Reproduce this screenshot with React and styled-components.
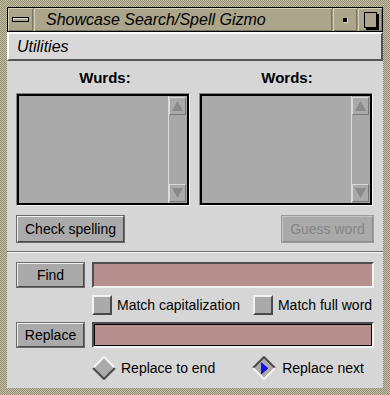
import React from "react";
import styled, { createGlobalStyle } from "styled-components";

const Global = createGlobalStyle`
  html, body { margin: 0; padding: 0; background: #000; }
  body { font-family: "Liberation Sans", Arial, sans-serif; }
  * { box-sizing: border-box; }
`;

const BG = "#d6d6d6";
const FACE = "#aaaaaa";

const Window = styled.div`
  width: 390px;
  height: 395px;
  padding: 7px;
  display: flex;
  flex-direction: column;
  background: repeating-conic-gradient(#c9c4a8 0 25%, #8f8a72 0 50%) 0 0 / 2px 2px;
`;

const TitleBar = styled.div`
  height: 25px;
  display: flex;
  border: 1px solid #000;
  background: #aaa58b;
`;

const TitleCell = styled.div`
  width: ${(p) => p.$w}px;
  display: flex;
  align-items: center;
  justify-content: center;
  box-shadow: inset 1px 1px 0 #d6d2ba, inset -1px -1px 0 #7a7662;
  border-left: ${(p) => (p.$sep ? "1px dotted #8a866f" : "none")};
`;

const TitleText = styled.div`
  flex: 1;
  display: flex;
  align-items: center;
  padding-left: 12px;
  font-style: italic;
  font-size: 16px;
  color: #000;
  box-shadow: inset 1px 1px 0 #d6d2ba, inset -1px -1px 0 #7a7662;
  border-left: 1px dotted #8a866f;
`;

const MenuGlyph = styled.div`
  width: 17px;
  height: 5px;
  background: #aaa58b;
  border: 1px solid #000;
  box-shadow: inset 1px 1px 0 #e0dcc4;
`;

const MinGlyph = styled.div`
  width: 4px;
  height: 4px;
  background: #000;
  box-shadow: 1px 1px 0 #e0dcc4;
`;

const MaxGlyph = styled.div`
  width: 13px;
  height: 16px;
  border: 1px solid #000;
  box-shadow: 2px 2px 0 #000;
  background: #aaa58b;
`;

const Body = styled.div`
  flex: 1;
  background: ${BG};
  display: flex;
  flex-direction: column;
`;

const MenuBar = styled.div`
  height: 29px;
  display: flex;
  align-items: center;
  padding-left: 8px;
  font-style: italic;
  font-size: 16px;
  background: #d8d8d8;
  border-top: 2px solid #fafafa;
  border-left: 2px solid #fafafa;
  border-bottom: 2px solid #555;
  border-right: 2px solid #555;
`;

const Content = styled.div`
  padding: 0 9px;
  display: flex;
  flex-direction: column;
`;

const Lists = styled.div`
  display: grid;
  grid-template-columns: 174px 174px;
  column-gap: 9px;
  padding-top: 8px;
`;

const ListCol = styled.div`
  display: flex;
  flex-direction: column;
  align-items: stretch;
`;

const Label = styled.div`
  text-align: center;
  font-weight: bold;
  font-size: 15px;
  line-height: 18px;
  height: 18px;
  margin-bottom: 6px;
  padding-left: ${(p) => p.$shift || 0}px;
`;

const ListBox = styled.div`
  height: 113px;
  border-top: 1px solid #888;
  border-left: 1px solid #888;
  border-bottom: 1px solid #f4f4f4;
  border-right: 1px solid #f4f4f4;
  display: flex;
`;

const ListInner = styled.div`
  flex: 1;
  display: flex;
  border: 2px solid #000;
  background: ${FACE};
`;

const ListArea = styled.div`
  flex: 1;
`;

const ScrollBar = styled.div`
  width: 19px;
  display: flex;
  flex-direction: column;
  border-left: 1px solid #ddd;
  background: #a8a8a8;
  padding: 1px 1px 1px 0;
`;

const Arrow = styled.div`
  height: 18px;
  display: flex;
  align-items: center;
  justify-content: center;
  border-top: 1px solid #d8d8d8;
  border-left: 1px solid #d8d8d8;
  border-bottom: 1px solid #777;
  border-right: 1px solid #777;
  background: ${FACE};
`;

const Trough = styled.div`
  flex: 1;
`;

const ButtonRow = styled.div`
  display: flex;
  justify-content: space-between;
  margin-top: 9px;
`;

const Button = styled.div`
  height: ${(p) => p.$h || 28}px;
  width: ${(p) => (p.$w ? p.$w + "px" : "auto")};
  padding: 0 ${(p) => (p.$w ? 0 : 7)}px;
  display: flex;
  align-items: center;
  justify-content: center;
  font-size: 14px;
  background: ${FACE};
  color: ${(p) => (p.$disabled ? "#858585" : "#000")};
  border-top: 2px solid ${(p) => (p.$disabled ? "#c4c4c4" : "#f2f2f2")};
  border-left: 2px solid ${(p) => (p.$disabled ? "#c4c4c4" : "#f2f2f2")};
  border-bottom: 2px solid ${(p) => (p.$disabled ? "#8c8c8c" : "#4a4a4a")};
  border-right: 2px solid ${(p) => (p.$disabled ? "#8c8c8c" : "#4a4a4a")};
  outline: 1px solid ${(p) => (p.$disabled ? "#9c9c9c" : "#6a6a6a")};
  outline-offset: -1px;
`;

const Separator = styled.div`
  margin: 8px -9px 0;
  height: 2px;
  border-top: 1px solid #6e6e6e;
  border-bottom: 1px solid #f6f6f6;
`;

const FieldRow = styled.div`
  display: flex;
  gap: 7px;
  margin-top: ${(p) => p.$mt}px;
  height: 26px;
`;

const Field = styled.div`
  flex: 1;
  background: #b78f8f;
  border-top: 2px solid #4e4e4e;
  border-left: 2px solid #4e4e4e;
  border-bottom: 2px solid #f2f2f2;
  border-right: 2px solid #f2f2f2;
  box-shadow: ${(p) => (p.$focus ? "inset 0 0 0 1px #000" : "none")};
`;

const OptionRow = styled.div`
  display: flex;
  align-items: center;
  margin-top: ${(p) => p.$mt}px;
  height: ${(p) => p.$h}px;
  padding-left: ${(p) => p.$pl}px;
`;

const Option = styled.div`
  display: flex;
  align-items: center;
  gap: ${(p) => p.$gap}px;
  font-size: 14px;
  margin-right: ${(p) => p.$mr || 0}px;
`;

const Check = styled.div`
  width: 20px;
  height: 20px;
  background: ${FACE};
  border-top: 2px solid #f2f2f2;
  border-left: 2px solid #f2f2f2;
  border-bottom: 2px solid #4a4a4a;
  border-right: 2px solid #4a4a4a;
`;

const Diamond = ({ selected }) => (
  <svg width="24" height="24" viewBox="0 0 24 24">
    <polygon points="12,1 23,12 12,23 1,12" fill="#aaaaaa" />
    <polyline points="1,12 12,1 23,12" fill="none" stroke={selected ? "#4a4a4a" : "#f4f4f4"} strokeWidth="2" />
    <polyline points="1,12 12,23 23,12" fill="none" stroke={selected ? "#f4f4f4" : "#4a4a4a"} strokeWidth="2" />
    {selected && <polygon points="9,6 16,12 9,18" fill="#1010f0" />}
    {selected && <polyline points="9,18 16,12" fill="none" stroke="#000080" strokeWidth="1" />}
  </svg>
);

const Tri = ({ up }) => (
  <svg width="11" height="10" viewBox="0 0 11 10">
    <polygon points={up ? "5.5,0 11,10 0,10" : "0,0 11,0 5.5,10"} fill="#8a8a8a" />
  </svg>
);

const List = ({ label, shift }) => (
  <ListCol>
    <Label $shift={shift}>{label}</Label>
    <ListBox>
      <ListInner>
        <ListArea />
        <ScrollBar>
          <Arrow><Tri up /></Arrow>
          <Trough />
          <Arrow><Tri /></Arrow>
        </ScrollBar>
      </ListInner>
    </ListBox>
  </ListCol>
);

export default function App() {
  return (
    <>
      <Global />
      <Window>
        <TitleBar>
          <TitleCell $w={25}><MenuGlyph /></TitleCell>
          <TitleText>Showcase Search/Spell Gizmo</TitleText>
          <TitleCell $w={25} $sep><MinGlyph /></TitleCell>
          <TitleCell $w={25} $sep><MaxGlyph /></TitleCell>
        </TitleBar>
        <Body>
          <MenuBar>Utilities</MenuBar>
          <Content>
            <Lists>
              <List label="Wurds:" shift={4} />
              <List label="Words:" shift={2} />
            </Lists>
            <ButtonRow>
              <Button>Check spelling</Button>
              <Button $disabled $w={93}>Guess word</Button>
            </ButtonRow>
            <Separator />
            <FieldRow $mt={9}>
              <Button $w={69} $h={26}>Find</Button>
              <Field />
            </FieldRow>
            <OptionRow $mt={7} $h={20} $pl={76}>
              <Option $gap={5} $mr={13}><Check />Match capitalization</Option>
              <Option $gap={5}><Check />Match full word</Option>
            </OptionRow>
            <FieldRow $mt={7}>
              <Button $w={69} $h={26}>Replace</Button>
              <Field $focus />
            </FieldRow>
            <OptionRow $mt={8} $h={24} $pl={76}>
              <Option $gap={5} $mr={37}><Diamond />Replace to end</Option>
              <Option $gap={6}><Diamond selected />Replace next</Option>
            </OptionRow>
          </Content>
        </Body>
      </Window>
    </>
  );
}
